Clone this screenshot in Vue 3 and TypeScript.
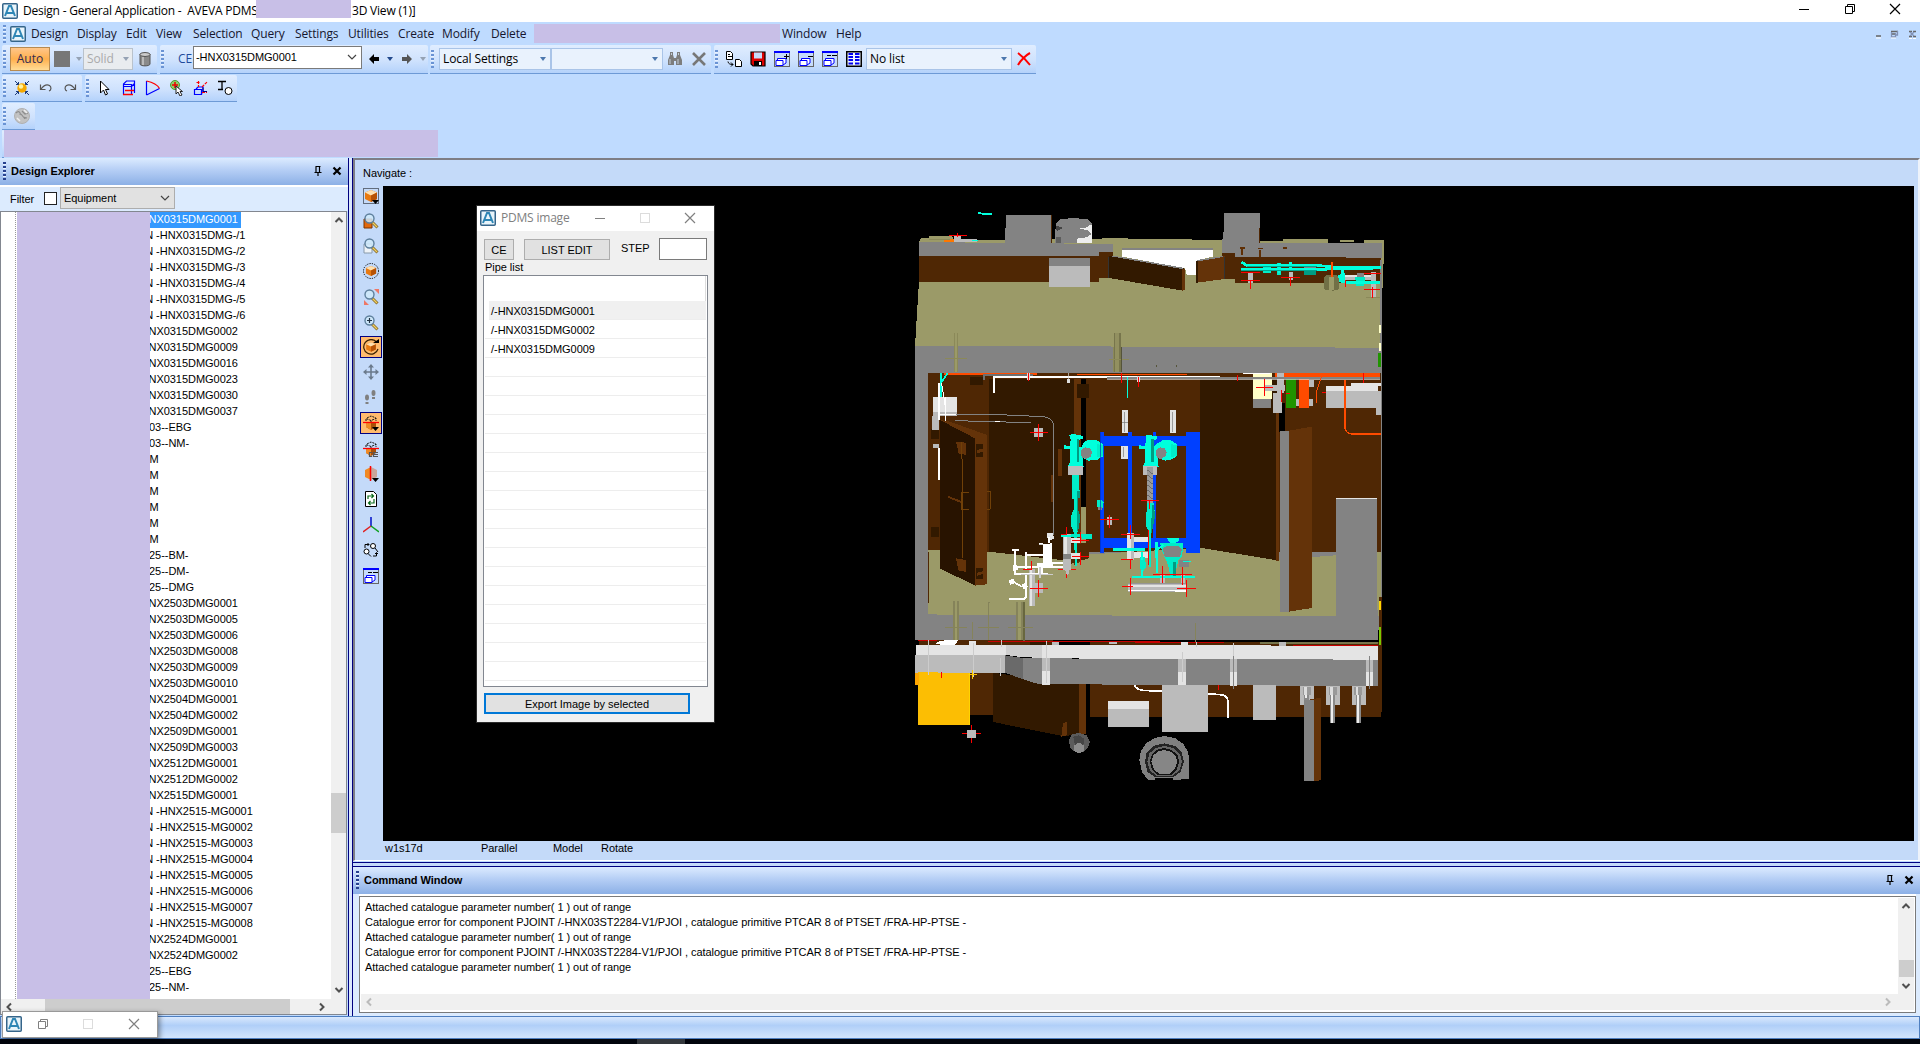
<script setup lang="ts">
type Poly = [fill: string, points: string]
type Line = [color: string, width: number, d: string]
interface Layer { y: number; polys: Poly[]; lines: Line[]; marks: string }

const menus: [string, number][] = [
  ['Design', 46], ['Display', 49], ['Edit', 30], ['View', 37], ['Selection', 58], ['Query', 44],
  ['Settings', 53], ['Utilities', 50], ['Create', 44], ['Modify', 49], ['Delete', 42],
]

const seq = (pre: string, ids: string[]) => ids.map((i) => pre + i)
const tree: string[] = [
  'NX0315DMG0001',
  ...seq('N -HNX0315DMG-/', ['1', '2', '3', '4', '5', '6']),
  ...seq('NX0315DMG00', ['02', '09', '16', '23', '30', '37']),
  '03--EBG', '03--NM-', 'M', 'M', 'M', 'M', 'M', 'M',
  '25--BM-', '25--DM-', '25--DMG',
  ...seq('NX2503DMG00', ['01', '05', '06', '08', '09', '10']),
  ...seq('NX2504DMG00', ['01', '02']),
  ...seq('NX2509DMG00', ['01', '03']),
  ...seq('NX2512DMG00', ['01', '02']),
  'NX2515DMG0001',
  ...seq('N -HNX2515-MG000', ['1', '2', '3', '4', '5', '6', '7', '8']),
  ...seq('NX2524DMG00', ['01', '02']),
  '25--EBG', '25--NM-',
]
const shift = (t: string) => (t.startsWith('N -') ? 'far' : t === 'M' ? 'em' : t.startsWith('N') ? 'en' : '')

const pipes = ['/-HNX0315DMG0001', '/-HNX0315DMG0002', '/-HNX0315DMG0009', ...Array(17).fill('')]

const rangeMsg = 'Attached catalogue parameter number( 1 ) out of range'
const catMsg = 'Catalogue error for component PJOINT /-HNX03ST2284-V1/PJOI , catalogue primitive PTCAR 8 of PTSET /FRA-HP-PTSE -'
const log = [rangeMsg, catMsg, rangeMsg, catMsg, rangeMsg]

const box = '<path d="M8 2l6 2.5v6.500L8 14l-6-3V4.500z" fill="#e87a12"/><path d="M8 2l6 2.500L8 7.500 2 4.500z" fill="#fde0b0"/><path d="M8 7.500v6.500l6-3V4.500z" fill="#b75205"/>'
const lens = '<path d="M9 9l5.500 5.500" stroke="#8a6d2c" stroke-width="3"/><path d="M9.500 9.500l4.500 4.500" stroke="#f0d060" stroke-width="1.300"/><circle cx="6.500" cy="5.500" r="4.500" fill="#cfe9fa" fill-opacity=".85" stroke="#5d7f9c" stroke-width="1.400"/>'
const halfbox = '<path d="M3 7h10v5l-5 3-5-3z" fill="#a85008"/><path d="M3 7h5v8l-5-3z" fill="#f08a25"/><path d="M4 3l4-2 5 2v3M3 6V3.500l5 2 5-2M8 5.500V7" stroke="#111" fill="none" stroke-dasharray="2 1"/><path d="M0 7.500h16" stroke="#f00" stroke-width="1.300"/>'
const drop = '<path d="M9 12h7l-3.500 4z" fill="#000"/>'
const win = '<rect x=".5" y=".5" width="15" height="15" fill="#c7dcfb" stroke="#666"/><path d="M0 1h16" stroke="#00f" stroke-width="2"/><path d="M2 9.500h7v5H2zM3.500 9V7.500H12v4.500l-3 2" fill="#fff" stroke="#00f"/>'
const icons: Record<string, string> = {
  logo: '<rect x=".75" y=".75" width="14.500" height="14.500" rx="1" fill="#e9f5fb" stroke="#35658a" stroke-width="1.500"/><path d="M3 13L7 3h2l4 10M4 10h8" fill="none" stroke="#2e86b5" stroke-width="2"/>',
  cyl: '<path d="M3 3v10c0 2.500 10 2.500 10 0V3z" fill="#8a8a8a" stroke="#555"/><ellipse cx="8" cy="3.500" rx="5" ry="2" fill="#ccc" stroke="#555"/><path d="M6 6v8" stroke="#bbb" stroke-width="2"/>',
  back: '<path d="M8 3L3 8l5 5v-3h5V6H8z" fill="#000"/>',
  fwd: '<path d="M8 3l5 5-5 5v-3H3V6h5z" fill="#555"/>',
  bino: '<path d="M1 14V9l2-5h3l1 3h2l1-3h3l2 5v5H9v-4H7v4zM3 1h3v3H3zM10 1h3v3h-3z" fill="#7d7d7d"/><path d="M3 8v5M11 8v5M4.500 2v2M11.500 2v2" stroke="#c4cfdc"/>',
  gx: '<path d="M2 2l12 12M14 2L2 14" stroke="#777" stroke-width="2.600"/>',
  copy: '<path d="M.5.500h4l2 2v6h-6zM9.500 8.500h4l2 2v5h-6z" fill="#fff" stroke="#000"/><path d="M2 3.500h2M2 5.500h4M2 10.500c0 2 2 3 5 3M5 11.500l2 2-2 2" fill="none" stroke="#000"/>',
  save: '<path d="M1 1h14v14H3l-2-2z" fill="#d00" stroke="#000" stroke-width="1.200"/><path d="M4 1.500h8v6H4z" fill="#c7dcfb" /><path d="M4 10h8v5H4z" fill="#000"/><path d="M9 11h2v3H9z" fill="#fff"/>',
  winp: win + '<path d="M10 5.500h5M12.500 3v5" stroke="#000"/>',
  winm: win + '<path d="M10 5.500h5" stroke="#000"/>',
  winmm: win + '<path d="M5 4.500h4M10 4.500h5" stroke="#000"/>',
  list: '<rect x=".75" y=".75" width="14.500" height="14.500" fill="#eef4ff" stroke="#000" stroke-width="1.500"/><path d="M2.500 3h4.500M2.500 6h4.500M2.500 9h4.500M2.500 12.500h4.500M9 3h4.500M9 6h4.500M9 9h4.500M9 12.500h4.500" stroke="#0000f0" stroke-width="2"/>',
  redx: '<path d="M2 2c4 3 8 7 12 12M14 2C10 4 4 10 2 14" fill="none" stroke="#f00" stroke-width="2"/>',
  sun: '<path d="M1 1l4 4M15 1l-4 4M1 15l4-4M15 15l-4-4" stroke="#1b3a7a" stroke-width="1"/><path d="M4.500 2v2.500H2M11.500 2v2.500H14M4.500 14v-2.500H2M11.500 14v-2.500H14" fill="none" stroke="#1b3a7a"/><circle cx="8" cy="8" r="4.700" fill="#f5a800"/><circle cx="7" cy="6.500" r="2.200" fill="#fff3a0"/>',
  undo: '<path d="M2.500 4.500v5h5M3 9C6 5 9 4 11.500 5.500c2 1.500 2 4.500-.5 5.500" fill="none" stroke="#555" stroke-width="1.200"/>',
  redo: '<path d="M13.500 4.500v5h-5M13 9C10 5 7 4 4.500 5.500c-2 1.500-2 4.500.5 5.500" fill="none" stroke="#555" stroke-width="1.200"/>',
  cursor: '<path d="M3.500 1v12l3-3 2 5 2-1-2-4.500H12z" fill="#fff" stroke="#000"/>',
  cube: '<path d="M2.500 6.500V4l3-3h8v2.500l-3 3zM2.500 6.500v8M13.500 4v9M10.500 6.500v8M10.500 6.500l3-3M2.500 4.500h8v2" fill="none" stroke="#00f" stroke-width="1.200"/><path d="M2 14.500h10M4 10.500h9" stroke="#f00" stroke-width="1.300"/>',
  tri: '<path d="M1.500 15V1M1.500 15L14.500 8.500" fill="none" stroke="#00f" stroke-width="1.200"/><path d="M1.500 1C6 2 12 4 14.500 8.500" fill="none" stroke="#f00" stroke-width="1.200"/>',
  pick: '<circle cx="6" cy="5" r="4.500" fill="#8fd068" stroke="#4a9a30"/><path d="M6 2v6M3 5h6" stroke="#e00" stroke-width="1.500"/><path d="M7 6v8l2-2 2 4 2-1-2-3.500h2.500z" fill="#fff" stroke="#222"/>',
  axes: '<path d="M1.500 9.500h7v5h-7zM3 9l2-2h5v5l-2 2" fill="none" stroke="#00f" stroke-width="1.200"/><path d="M5.500 1v6M3.500 2.500h4M9 7l5-5M9 12.500h5" stroke="#f00" stroke-width="1.200" stroke-dasharray="3 1"/><path d="M10 7.500v4h4" fill="none" stroke="#000080"/>',
  ibeam: '<path d="M1 1.500h8M5 1.500v8M1 9.500h5" stroke="#000" stroke-width="1.300"/><circle cx="11.500" cy="11" r="3.500" fill="#fff" stroke="#000"/>',
  globe: '<circle cx="8" cy="8" r="7.500" fill="#c2c2c2" stroke="#b0b0b0"/><path d="M2 5c3-3 5 0 4 2M8 3l3 3 3-1M9 9l4 1M7 6l4 5" fill="none" stroke="#8c8c8c" stroke-width="1.200"/><path d="M3 10l3 3M10 2l3 3" stroke="#eee" stroke-width="1.500"/>',
  n0: '<rect x=".5" y=".5" width="15" height="15" fill="none" stroke="#000" stroke-dasharray="1 1"/>' + box + drop,
  n1: '<path d="M1 6h8v9H1z" fill="#e2680c" stroke="#7a3500"/>' + lens,
  n2: '<path d="M1 6h8v9H1z" fill="#eef3f8" stroke="#8899aa"/>' + lens,
  n3: '<circle cx="8" cy="8" r="7.500" fill="none" stroke="#000" stroke-dasharray="1.200 1.200"/><g transform="translate(1.200 1.200) scale(.85)">' + box + '</g>',
  n4: '<path d="M11 0h5v5zM1 11v5h5z" fill="#ee7766"/>' + lens,
  n5: lens + '<path d="M4 5.500h5M6.500 3v5" stroke="#234" stroke-width="1.200"/>',
  n6: '<g transform="translate(1.600 1.600) scale(.8)">' + box + '</g><path d="M13.500 3A7.300 7.300 0 1 0 15 10" fill="none" stroke="#3a2000" stroke-width="1.200"/><path d="M10 4h6V0z" fill="#000"/>',
  n7: '<path d="M8 1v14M1 8h14" stroke="#6b7a8c" stroke-width="1.600"/><path d="M8 0l3 3.500H5zM8 16l3-3.500H5zM0 8l3.500-3v6zM16 8l-3.500-3v6z" fill="#6b7a8c"/>',
  n8: '<ellipse cx="4" cy="8.500" rx="2" ry="3" fill="#808080"/><path d="M2.500 13h3v2h-3zM9 8h3v2H9z" fill="#808080"/><ellipse cx="10.500" cy="4" rx="2" ry="3" fill="#808080"/>',
  n9: halfbox + drop,
  n10: halfbox + '<path d="M9 11.500H6.500V15.500H9M15 11.500h-4.500v4H15M10.500 13.500H15" fill="none" stroke="#555" stroke-width="1.200"/>',
  n11: '<path d="M2 4l6-3v13l-6-3z" fill="#f08a25"/><path d="M8 1l6 3v7l-6 3z" fill="#caa59a"/><path d="M7.500 0v15" stroke="#f00" stroke-width="1.500"/>' + drop,
  n12: '<path d="M2.500.500h8l3 3v12h-11z" fill="#fff" stroke="#000"/><path d="M5 8V5h5M8.500 3L10.500 5l-2 2M11 8v4H6M7.500 10l-2 2 2 2" fill="none" stroke="#0a6a1a" stroke-width="1.200"/>',
  n13: '<path d="M8 0v9" stroke="#2030d0" stroke-width="1.800"/><path d="M8 9l-8 6" stroke="#e02020" stroke-width="1.500"/><path d="M8 9l8 6" stroke="#10a020" stroke-width="1.500"/>',
  n14: '<circle cx="10" cy="4" r="2.500" fill="#fff" stroke="#000"/><circle cx="3.500" cy="9.500" r="2.500" fill="#fff" stroke="#000"/><path d="M12 6l3 4M5 11.500l3 3M2 6V2.500h4M4.500 1L6 2.500 4.500 4M10 14h3.500V11M12 12l1.500-1.500L15 12" fill="none" stroke="#000"/>',
  n15: win + '<path d="M5 4.500h4M10 4.500h5" stroke="#000"/>',
  pin: '<path d="M5.500 3.500h5M6 3.500V9M9.500 3.500V9M4.500 9.500h7M8 10v3" fill="none" stroke="#000" stroke-width="1.200"/>',
  bx: '<path d="M4.500 4.500l7 7M11.500 4.500l-7 7" stroke="#000" stroke-width="2.200"/>',
  min: '<path d="M3 8.500h10" stroke="currentColor"/>',
  max: '<rect x="3.500" y="3.500" width="9" height="9" fill="none" stroke="currentColor"/>',
  rest: '<path d="M3.500 5.500h7v7h-7zM5.500 5.500v-2h7v7h-2" fill="none" stroke="currentColor"/>',
  close: '<path d="M3 3l10 10M13 3L3 13" stroke="currentColor" stroke-width="1.200"/>',
  up: '<path d="M4.500 10l3.500-3.500 3.500 3.500" fill="none" stroke="currentColor" stroke-width="2"/>',
  down: '<path d="M4.500 6l3.500 3.500L11.500 6" fill="none" stroke="currentColor" stroke-width="2"/>',
  left: '<path d="M10 4.500L6.500 8l3.500 3.500" fill="none" stroke="currentColor" stroke-width="2"/>',
  right: '<path d="M6 4.500L9.500 8 6 11.500" fill="none" stroke="currentColor" stroke-width="2"/>',
  chev: '<path d="M4 6l4 4 4-4" fill="none" stroke="#444" stroke-width="1.200"/>',
}
const nav: [string, number, boolean][] = [
  ['n0', 25, false], ['n1', 25, false], ['n2', 25, false], ['n3', 26, false], ['n4', 26, false], ['n5', 25, false],
  ['n6', 24, true], ['n7', 25, false], ['n8', 26, false], ['n9', 26, true], ['n10', 25, false], ['n11', 25, false],
  ['n12', 26, false], ['n13', 26, false], ['n14', 23, false], ['n15', 30, false],
]
const rowTools = ['copy', 'save', 'winp', 'winm', 'winmm', 'list']
const pickTools = ['cursor', 'cube', 'tri', 'pick', 'axes', 'ibeam']

const r = (x: number, y: number, x2: number, y2: number) => `${x},${y} ${x2},${y} ${x2},${y2} ${x},${y2}`
const G = '#838383', O = '#9b9a68', B = '#4f2704', D = '#321900', M = '#643309', L = '#bbbbbb', W = '#e4e4e4'
const C = '#00ffdc', T = '#00ecc8', S = '#009c82', K = '#0040ff', R = '#ff4b00'

/* The model, from the roof down; one unit is a third of a pixel. */
const layers: Layer[] = [
  {
    y: 370,
    polys: [
      [G, r(45, -10, 1446, 780)], [B, r(84, 5, 1443, 545)], [O, '84,540 267,545 460,560 900,533 1130,570 1443,545 1443,738 786,738 138,734 84,731'],
      [D, '267,28 524,28 524,560 500,572 267,545'], [M, '522,28 543,28 543,575 522,585'], ['#000', r(543, 28, 558, 410)], [O, r(543, 410, 558, 520)],
      [D, '530,43 566,43 566,83 530,83'], [D, '900,28 1137,28 1137,572 900,533'], [M, r(1128, 130, 1137, 572)], ['#000', r(1137, 100, 1155, 185)],
      [M, r(474, 238, 485, 318)], [M, r(453, 315, 461, 395)], [B, '500,520 566,525 566,565 500,585'],
      ['#281300', '120,150 225,205 225,647 120,595'], [M, '120,150 150,155 261,195 261,643 225,647 225,205'],
      [M, '168,215 197,218 197,255 176,250'], [M, '168,565 197,570 197,605 176,603'], [D, r(228, 222, 248, 260)], [D, r(228, 594, 248, 626)],
      [M, '231,240 248,236 248,245 231,250'], [M, '231,608 248,604 248,612 231,618'], [M, '145,378 190,395 190,402 145,384'],
      [D, r(92, 178, 118, 208)], [D, r(92, 472, 118, 502)],
      [W, r(99, 81, 171, 125)], [L, r(99, 125, 171, 138)], [L, r(95, 138, 116, 180)], [L, r(98, 222, 116, 234)],
      [K, r(600, 185, 611, 548)], [K, r(684, 186, 696, 505)], [K, r(759, 186, 768, 505)], [K, r(858, 186, 900, 548)],
      [K, r(611, 198, 858, 228)], [K, r(611, 505, 858, 535)],
      [W, r(666, 120, 684, 188)], [W, r(810, 120, 827, 188)], [W, r(664, 228, 684, 266)],
      [G, r(1140, 182, 1167, 726)], [M, '1167,182 1236,170 1236,713 1167,725'], [G, r(1308, 384, 1431, 745)], [W, r(1308, 384, 1431, 387)],
      [R, r(132, 6, 410, 14)], [R, r(1125, 9, 1440, 24)], ['#ffffc8', r(1059, 9, 1116, 87)], [G, r(1059, 87, 1113, 114)],
      ['#209400', r(1158, 22, 1188, 114)], [R, r(1197, 22, 1227, 114)], [L, r(1132, 9, 1153, 70)], [L, r(1119, 70, 1145, 129)],
      [L, r(1092, 45, 1155, 62)], [L, r(1188, 88, 1197, 108)], [L, r(1227, 88, 1239, 108)], [L, r(1227, 30, 1242, 50)],
      [W, r(1278, 48, 1434, 62)], [L, r(1278, 62, 1443, 114)], [W, r(1353, 38, 1443, 48)], [L, r(1428, 114, 1443, 134)],
      [C, '508,195 520,192 535,195 550,198 548,206 538,209 538,232 545,232 552,222 548,285 552,290 503,290 510,275 510,238 493,238 493,226 510,228 512,209'],
      [C, '548,220 565,209 590,210 608,222 609,260 590,270 565,272 545,262'], [T, '590,222 608,226 608,258 590,262'], [S, r(530, 206, 538, 275)], [G, '543,240 556,232 570,235 577,247 572,260 558,267 545,262'],
      [L, r(503, 288, 549, 314)], [T, '515,314 537,314 537,358 541,362 541,382 534,386 534,420 541,440 536,476 532,488 532,590 525,588 522,488 514,470 514,436 522,415 522,388 515,385 515,358'],
      [S, '531,362 541,362 541,382 534,386 534,420 541,440 536,476 530,488'],
      [C, '738,195 772,198 770,208 762,210 762,228 772,222 773,280 776,290 728,290 736,275 736,238 718,238 718,226 736,228'],
      [C, '772,220 790,210 812,210 830,222 831,258 815,268 795,272 770,262'], [T, '812,222 830,226 830,258 812,262'], [S, r(754, 206, 762, 275)], [G, '768,240 780,232 794,235 801,247 795,260 782,267 770,262'],
      [L, r(729, 288, 771, 314)], ['#9a9a9a', r(741, 290, 760, 400)], [T, '741,400 762,400 765,440 758,476 754,490 754,590 748,590 748,488 739,470 739,436'], [S, '755,405 762,405 765,440 758,476 754,490'],
      [T, '591,392 600,388 611,395 609,412 600,420 592,412'], [G, r(594, 412, 607, 421)],
      [L, r(489, 492, 512, 600)], [W, r(493, 494, 500, 552)], [G, r(489, 552, 512, 566)], [W, r(512, 504, 542, 518)], [W, r(512, 550, 542, 566)], [T, '512,492 575,492 575,506 545,506 545,500 512,500'],
      [L, '496,600 508,600 505,615 498,615'], [W, r(681, 490, 702, 570)], [L, r(692, 490, 702, 570)], [W, r(702, 502, 746, 516)], [W, r(702, 546, 746, 564)],
      [C, '640,534 735,534 735,542 640,542'], [T, '780,520 850,520 850,530 845,560 835,570 828,600 826,625 810,625 808,600 800,575 785,540'], [C, '800,505 835,503 838,512 826,518 810,518'],
      [G, '788,535 800,528 835,528 846,538 840,562 795,562'], [G, r(838, 570, 867, 590)], [T, '720,560 735,560 738,590 730,605 720,595'], [C, '765,515 775,515 773,610 768,610'],
      [S, r(820, 575, 828, 622)],
      [L, r(684, 640, 858, 664)], [W, r(684, 644, 858, 652)], [L, r(780, 612, 795, 640)], [L, r(843, 612, 855, 640)], ['#fff', r(684, 660, 860, 665)],
      ['#fff', '428,522 456,520 458,592 430,590'], [W, '440,488 458,490 463,505 448,512 440,500'], [L, r(388, 597, 406, 708)], [W, r(391, 597, 397, 708)], [L, r(402, 640, 430, 670)], [L, r(402, 174, 428, 200)],
      ['#fff', '338,585 350,585 356,600 340,602'], ['#fff', '326,630 340,627 345,640 330,645'], ['#fff', '364,645 376,638 384,650 372,658'], ['#fff', '412,580 428,578 430,608 414,608'], [L, r(620, 440, 636, 465)],
      ['#85835a', r(162, 694, 176, 780)], [O, r(166, 694, 172, 780)], ['#85835a', r(347, 696, 375, 780)], [O, r(352, 696, 365, 780)],
    ],
    lines: [
      ['#fff', 6, 'M283 70V22H960M1030 10H1110'], ['#6f6f6f', 6, 'M252 70V15H400'], [R, 4, 'M530 14H860'], [G, 4, 'M620 24H1440'], ['#ddd', 2, 'M620 28H1440M505 8V36'],
      ['#ddd', 8, 'M385 8V30M505 26V38M715 18V36'],
      [R, 4, 'M1335 30V175Q1340 192 1355 192H1443'], [R, 3, 'M1251 98V60L1265 18'], [C, 5, 'M124 5V80M144 8L122 40M683 20V84'], ['#fff', 5, 'M117 40V150M117 235V330'], ['#fff', 3, 'M125 40L136 110V150M138 152V82'],
      [G, 3, 'M120 134H300L430 140Q460 145 460 165V495M165 152L392 158'], ['#fff', 3, 'M120 134H168M285 155H300'],
      ['#704008', 3, 'M184 215V245L188 290V565M206 368H184V418H206M262 364H271V418H262'],
      ['#0030c0', 2, 'M603 186V546'], ['#6b6b6b', 3, 'M742 300L758 312M742 315L758 327M742 330L758 342M742 345L758 357M742 360L758 372M742 375L758 387'],
      ['#777', 2, 'M675 125V185M818 125V185M672 232V262M665 157H684'],
      ['#fff', 5, 'M345 540V612H445M335 540H356M378 545V600M378 556H450M345 592H490M448 500V520M418 523H430M458 580H490'], ['#fff', 5, 'M378 612V680Q376 688 365 688H327M340 635L365 650'],
      ['#ccc', 4, 'M420 590V625M362 614H460M416 523H430'], [C, 6, 'M484 498H512M697 622H885M727 600V622M727 545V570M770 540L790 525'], [C, 4, 'M825 508V520M850 575H872'],
      [G, 2, 'M684 642H858M684 664H825'], ['#85835a', 3, 'M268 696V780M217 755V780M886 757V780M135 772H200M234 772H298M324 772H396M378 712H416'],
      [B, 3, 'M86 545V704'], ['#f9b800', 3, 'M1440 692V720M1438 740V770'],
    ],
    marks: 'M385 8V34M415 162V214M390 187H444M360 8H410M715 20V50M665 10V38M1093 28V78M1068 52H1118M1012 15V32M1390 10V38M1145 60V96M1158 70H1170M1266 68H1278M499 470V496M483 495H500M541 485V518M515 511H568M515 559H568M541 545V585M750 390V418M723 391H777M628 435V475M600 448H657M691 466V506M664 493H720M691 568V596M664 568H700M745 480V585M787 588V640M760 613H876M847 590V645M691 625V675M666 649H700M859 630V680M832 655H888M415 630V680M390 655H444M395 574V600M368 598H395M499 612V625M475 598H490M512 598H528',
  },
  {
    y: 190,
    polys: [
      [O, '63,144 87,144 87,138 155,138 160,146 235,150 650,145 968,150 1080,153 1149,153 1149,147 1284,147 1284,162 1392,162 1392,150 1451,150 1451,210 1440,475 45,468 57,275 57,156'],
      [G, '57,156 235,158 640,162 640,198 57,198'], [B, '57,198 597,198 597,186 640,186 640,200 625,264 597,264 597,276 57,276'],
      [G, '315,158 318,75 455,75 455,158'], [B, r(452, 75, 456, 158)],
      [G, '468,100 480,88 520,84 562,88 576,100 576,158 465,158 465,135'], ['#eee', '540,115 576,104 576,158 530,158'], ['#5d5d5d', r(468, 140, 484, 158)], ['#444', '468,106 490,114 470,124'],
      [G, '468,100 480,88 520,84 562,88 576,100 562,112 520,116 480,112'], [G, '465,130 480,118 520,114 562,120 574,132 560,142 520,146 480,142'],
      [G, r(447, 204, 570, 228)], [L, r(447, 228, 570, 291)],
      ['#fff', '666,178 939,178 939,200 888,212 888,254 860,254 855,235 700,206 666,200'], [G, r(666, 174, 939, 179)],
      [D, '628,198 855,236 848,302 628,264'], [G, '628,198 660,200 855,234 845,237'], [M, '846,236 855,236 855,300 846,302'],
      [G, '972,69 1080,69 1080,162 1446,162 1446,203 965,190 965,150 970,146'], [G, r(1004, 160, 1446, 203)], [B, '966,189 1004,189 1004,201 1443,203 1443,279 1004,279 1004,267 975,267'],
      [M, '890,212 975,198 975,267 890,278'], [G, '890,210 970,198 970,201 895,214'], ['#321900', r(888, 212, 893, 278)],
      [B, r(1076, 113, 1080, 160)],
      [G, '45,468 630,468 635,472 1278,472 1440,475 1440,548 45,548'], [G, r(1440, 210, 1446, 548)], [O, r(1320, 150, 1362, 155)],
      ['#8b8959', r(162, 430, 174, 546)], ['#9b9a68', r(166, 430, 171, 546)], ['#77754c', r(642, 430, 663, 546)], ['#929060', r(646, 430, 656, 546)],
      ['#717046', '1272,262 1280,254 1308,254 1316,262 1316,298 1300,302 1272,298'], [O, r(1288, 262, 1302, 300)],
      [L, r(1326, 256, 1425, 270)], [W, r(1326, 256, 1425, 262)], [L, r(1044, 245, 1059, 278)], [L, r(1166, 245, 1179, 270)], [L, r(1413, 245, 1428, 320)],
      [T, r(1130, 220, 1144, 255)], [T, r(1088, 230, 1114, 248)], [S, r(1212, 228, 1248, 254)], [C, '1314,255 1335,250 1335,278 1318,275'], [T, '1366,262 1395,262 1392,288 1368,288'],
      [G, r(1212, 228, 1248, 236)], [G, r(1372, 250, 1392, 262)],
      [L, r(162, 138, 183, 156)], [L, r(183, 147, 230, 156)], ['#ff7700', r(132, 148, 162, 155)], [B, r(245, 570, 265, 616)], ['#321900', r(209, 562, 248, 586)],
      ['#209400', r(1435, 490, 1443, 530)], ['#ffffc8', r(1438, 405, 1443, 430)], ['#ffffc8', r(1438, 458, 1443, 482)],
    ],
    lines: [
      [C, 5, 'M235 68L250 72H275M215 152H234'], [C, 8, 'M1024 216L1040 226H1250L1300 231H1443M1024 238H1260L1443 234M1328 240V275L1345 278H1440M1137 220V250M1172 215V240'],
      ['#00a890', 3, 'M1040 230H1250M1024 242H1250'],
      ['#5f2f05', 5, 'M1020 175H1034M1026 178V196M1074 176H1088M1080 180V200M1149 175H1160'], [R, 6, 'M1295 216V262'], ['#333', 3, 'M625 200V264M973 200V267'],
      ['#8b8959', 3, 'M135 505H200M628 508H686M640 470V545M87 148H150M1398 324H1440'], ['#55543a', 3, 'M664 470V545M770 525V530M829 525V530'],
    ],
    marks: 'M172 128V142M147 136H200M1051 272V297M1024 247H1080M1024 271H1080M1172 265V288M1143 262H1200M1336 270V290M1418 290V324M1392 250H1443M1392 298H1440',
  },
  {
    y: 590,
    polys: [
      ['#000', r(45, 150, 1450, 165)], [G, r(45, 60, 1434, 150)], [O, '84,40 1308,40 1308,78 786,77 138,75 84,72'], [G, r(1140, 20, 1167, 66)], [M, '1167,20 1236,20 1236,54 1167,65'], [G, r(1308, 20, 1431, 150)],
      ['#85835a', r(347, 36, 375, 152)], [O, r(353, 36, 363, 152)], [L, r(388, 0, 406, 48)], [W, r(391, 0, 397, 48)],
      ['#4f2704', r(57, 150, 460, 168)], [B, r(570, 156, 1443, 380)], ['#321900', r(390, 156, 440, 166)], ['#77764c', r(1080, 157, 1434, 163)], [B, r(210, 248, 279, 375)],
      [D, '279,248 430,270 557,280 537,300 537,434 488,438 279,396'], [M, '537,280 557,282 557,432 537,434'], [M, '489,400 500,396 500,436 484,440'],
      ['#c80000', '700,154 980,156 960,160 710,160'], ['#fff', '120,152 175,150 165,165 105,163'], [W, r(207, 152, 228, 166)], [L, r(456, 152, 477, 166)], [L, r(627, 152, 651, 163)], [W, r(843, 155, 864, 166)], [L, r(1136, 155, 1158, 168)],
      [W, '48,166 440,165 780,165 1434,168 1434,209 560,206 370,202 318,194 48,196'], [L, '45,196 318,194 318,248 45,248'],
      ['#6a6a6a', '315,196 369,204 369,268 315,248'], [G, '369,204 560,206 1434,209 1434,288 786,285 415,282 369,268'],
      ['#cfcfcf', '318,166 425,166 425,203 370,202 318,195'], [W, r(426, 165, 450, 284)], [L, r(427, 203, 449, 243)], [W, r(834, 165, 858, 285)], [L, r(835, 207, 857, 246)], [W, r(990, 170, 1011, 287)], [L, r(991, 208, 1010, 246)], [W, r(1398, 170, 1419, 288)], [L, r(1399, 209, 1418, 246)],
      ['#fcbe03', '54,246 210,250 210,405 54,405'], ['#ffa600', r(46, 250, 56, 284)],
      [W, r(624, 333, 747, 357)], [L, r(624, 357, 747, 411)], [L, r(786, 285, 924, 426)], [L, r(1059, 285, 1128, 391)],
      [L, r(1200, 288, 1242, 345)], [L, r(1278, 288, 1320, 345)], [L, r(1356, 288, 1398, 345)],
      [G, r(1212, 330, 1242, 573)], [M, '1224,328 1263,324 1263,571 1242,573 1242,330'], [L, r(201, 420, 228, 444)],
      ['#5b5b5b', '507,450 515,434 537,428 560,436 570,455 564,474 550,486 526,486 510,474'], ['#454545', '520,440 537,436 552,446 550,470 526,470'], ['#8d8d8d', '522,466 537,458 552,466 552,482 537,491 523,484'],
      ['#808080', '718,510 722,485 738,460 765,444 793,438 825,444 850,462 864,485 868,512 866,566 850,566 840,570 744,570 726,546'],
      ['#222', '735,515 740,488 760,468 793,460 825,468 845,488 852,515 842,545 820,562 765,562 742,545'],
      ['#666', '742,515 748,490 768,474 793,468 820,474 840,492 846,515 838,542 816,558 770,558 750,542'],
      ['#111', '750,514 756,492 774,478 793,474 815,480 832,494 838,514 830,540 812,556 774,556 756,540'],
      ['#868686', '754,514 760,496 776,484 793,480 812,485 826,496 832,514 824,538 808,552 778,552 762,538'],
      ['#000', r(765, 563, 820, 572)],
      [B, r(1436, 20, 1446, 365)], ['#7ac800', r(1438, 110, 1444, 165)], ['#ffd500', r(1438, 32, 1444, 60)],
      ['#85835a', r(160, 34, 176, 150)], [O, r(166, 34, 172, 150)], ['#68673f', r(370, 36, 376, 152)],
    ],
    lines: [
      ['#c80000', 3, 'M55 152H112M265 154H780M1180 167H1434'],
      ['#85835a', 3, 'M267 36V150M217 96V146M887 98V156M135 112H200M234 112H298M324 112H398'],
      ['#ccc', 3, 'M85 150V255M220 160V260M304 150V170M301 205V258M439 152V280M847 185V275M889 155V172M1000 158V200'], [G, 3, 'M1000 198V296M1408 198V296'],
      ['#fff', 5, 'M703 285Q712 300 728 301L786 304M924 311L970 315Q984 320 985 340V384'], ['#ffc800', 4, 'M217 240V266M204 253H231'], ['#ffe000', 2, 'M209 250V405'],
      ['#8a8a8a', 14, 'M1298 290V400M1375 290V400M1220 290V330'], ['#eee', 5, 'M1297 300V400M1374 300V400M1218 290V325'], ['#999', 24, 'M1298 292V315M1375 292V315M1220 292V315'], ['#ddd', 7, 'M1295 292V315M1372 292V315M1217 292V315'],
    ],
    marks: 'M124 246V264M214 405V420M214 444V459M186 430H201M228 430H243M955 285V300',
  },
]
</script>

<template>
  <div class="app">
    <header class="title">
      <svg class="ic" viewBox="0 0 16 16" v-html="icons.logo" />
      <span class="caption">Design - General Application - &nbsp;AVEVA PDMS</span>
      <i class="mask" />
      <span class="caption tail">3D View (1)]</span>
      <div class="winbtns">
        <svg class="ic" viewBox="0 0 16 16" v-html="icons.min" />
        <svg class="ic" viewBox="0 0 16 16" v-html="icons.rest" />
        <svg class="ic" viewBox="0 0 16 16" v-html="icons.close" />
      </div>
    </header>

    <nav class="menu">
      <i class="grip" />
      <svg class="ic" viewBox="0 0 16 16" v-html="icons.logo" />
      <div class="items">
        <span v-for="m in menus" :key="m[0]" :style="{ width: m[1] + 'px' }">{{ m[0] }}</span>
      </div>
      <i class="mask" />
      <span class="win">Window</span><span>Help</span>
      <svg class="mdi" viewBox="0 0 42 10">
        <path d="M0 6h5M15 1.500h7M15 4h5M33 1.500h3M37 1.500h3M33 6.500h3M37 6.500h3" stroke="#666" stroke-width="1.500" />
        <path d="M15.500 2v5h4V3M21.500 1v4h-2M34 2l4 4M38 2l-4 4" fill="none" stroke="#8090b4" stroke-width="1.300" />
        <path d="M0 8h5M15 8h5M33 8.500h3M37 8.500h3" stroke="#fff" />
      </svg>
    </nav>

    <div class="bar b1">
      <div class="seg sa">
        <i class="grip" /><button class="auto">Auto</button><i class="swatch" /><i class="tri off" />
        <div class="cmb solid">Solid<i class="tri off" /></div>
        <svg class="ic" viewBox="0 0 16 16" v-html="icons.cyl" />
      </div>
      <div class="seg sb">
        <i class="grip" /><span class="ce">CE</span>
        <div class="edit">-HNX0315DMG0001<svg class="ic" viewBox="0 0 16 16" v-html="icons.chev" /></div>
        <svg class="ic" viewBox="0 0 16 16" v-html="icons.back" /><i class="tri dark" />
        <svg class="ic" viewBox="0 0 16 16" v-html="icons.fwd" /><i class="tri off" />
      </div>
      <div class="seg sc">
        <i class="grip" />
        <div class="cmb">Local Settings<i class="tri" /></div>
        <div class="cmb"><i class="tri" /></div>
        <svg class="ic" viewBox="0 0 16 16" v-html="icons.bino" />
        <svg class="ic" viewBox="0 0 16 16" v-html="icons.gx" />
      </div>
      <div class="seg sd">
        <i class="grip" />
        <svg v-for="t in rowTools" :key="t" class="ic" viewBox="0 0 16 16" v-html="icons[t]" />
        <div class="cmb">No list<i class="tri" /></div>
        <svg class="ic" viewBox="0 0 16 16" v-html="icons.redx" />
      </div>
    </div>
    <div class="bar b2">
      <div class="seg se">
        <i class="grip" />
        <svg v-for="t in ['sun', 'undo', 'redo']" :key="t" class="ic" viewBox="0 0 16 16" v-html="icons[t]" />
      </div>
      <div class="seg sf">
        <i class="grip" />
        <svg v-for="t in pickTools" :key="t" class="ic" viewBox="0 0 16 16" v-html="icons[t]" />
      </div>
    </div>
    <div class="bar b3">
      <div class="seg sg"><i class="grip" /><svg class="ic" viewBox="0 0 16 16" v-html="icons.globe" /></div>
    </div>
    <div class="bar b4"><div class="seg sh" /><i class="mask" /></div>

    <main class="main">
      <section class="explorer">
        <div class="head">
          <i class="grip navy" /><b>Design Explorer</b>
          <svg class="ic" viewBox="0 0 16 16" v-html="icons.pin" />
          <svg class="ic" viewBox="0 0 16 16" v-html="icons.bx" />
        </div>
        <div class="filter">
          <span>Filter</span><i class="check" />
          <div class="drop">Equipment<svg class="ic" viewBox="0 0 16 16" v-html="icons.chev" /></div>
        </div>
        <div class="tree">
          <i class="dots" />
          <i class="mask" />
          <ul>
            <li v-for="(t, i) in tree" :key="i" :class="{ sel: i === 0 }"><span :class="shift(t)">{{ t }}</span></li>
          </ul>
          <div class="vbar">
            <svg class="ic" viewBox="0 0 16 16" v-html="icons.up" />
            <i class="thumb" />
            <svg class="ic" viewBox="0 0 16 16" v-html="icons.down" />
          </div>
          <div class="hbar">
            <svg class="ic" viewBox="0 0 16 16" v-html="icons.left" />
            <i class="thumb" />
            <svg class="ic" viewBox="0 0 16 16" v-html="icons.right" />
          </div>
        </div>
      </section>
      <div class="split" />
      <div class="right">
        <section class="view">
          <div class="navlabel">Navigate :</div>
          <div class="canvasrow">
            <div class="navbar">
              <div v-for="n in nav" :key="n[0]" class="nv" :style="{ height: n[1] + 'px' }">
                <span :class="{ on: n[2] }"><svg class="ic" viewBox="0 0 16 16" v-html="icons[n[0]]" /></span>
              </div>
            </div>
            <svg class="scene" viewBox="383 186 1531 655" shape-rendering="crispEdges">
              <g v-for="(l, i) in layers" :key="i" :transform="`translate(900 ${l.y}) scale(.33333)`">
                <polygon v-for="(p, j) in l.polys" :key="'p' + j" :fill="p[0]" :points="p[1]" />
                <path v-for="(p, j) in l.lines" :key="'l' + j" :stroke="p[0]" :stroke-width="p[1]" :d="p[2]" fill="none" />
                <path :d="l.marks" stroke="#f00" stroke-width="3" />
              </g>
            </svg>
          </div>
          <div class="info"><span>w1s17d</span><span>Parallel</span><span>Model</span><span>Rotate</span></div>
        </section>
        <div class="hsplit" />
        <section class="command">
          <div class="head">
            <i class="grip navy" /><b>Command Window</b>
            <svg class="ic" viewBox="0 0 16 16" v-html="icons.pin" />
            <svg class="ic" viewBox="0 0 16 16" v-html="icons.bx" />
          </div>
          <div class="console">
            <div class="lines"><p v-for="(l, i) in log" :key="i">{{ l }}</p></div>
            <div class="vbar">
              <svg class="ic" viewBox="0 0 16 16" v-html="icons.up" />
              <i class="thumb" />
              <svg class="ic" viewBox="0 0 16 16" v-html="icons.down" />
            </div>
            <div class="hbar">
              <svg class="ic" viewBox="0 0 16 16" v-html="icons.left" />
              <svg class="ic" viewBox="0 0 16 16" v-html="icons.right" />
            </div>
          </div>
        </section>
      </div>
    </main>
    <footer class="status" />
    <div class="taskbar"><i /></div>

    <div class="dialog">
      <div class="dtitle">
        <svg class="ic" viewBox="0 0 16 16" v-html="icons.logo" />
        <span>PDMS image</span>
        <svg class="ic" viewBox="0 0 16 16" v-html="icons.min" />
        <svg class="ic faint" viewBox="0 0 16 16" v-html="icons.max" />
        <svg class="ic" viewBox="0 0 16 16" v-html="icons.close" />
      </div>
      <div class="dtools">
        <button class="btn c">CE</button><button class="btn l">LIST EDIT</button><span>STEP</span><i class="field" />
      </div>
      <div class="dlabel">Pipe list</div>
      <div class="plist">
        <div class="phead" />
        <div v-for="(p, i) in pipes" :key="i" class="prow" :class="{ cur: i === 0 }">{{ p }}</div>
      </div>
      <button class="export">Export Image by selected</button>
    </div>

    <div class="mini">
      <svg class="ic" viewBox="0 0 16 16" v-html="icons.logo" />
      <svg class="ic" viewBox="0 0 16 16" v-html="icons.rest" />
      <svg class="ic faint" viewBox="0 0 16 16" v-html="icons.max" />
      <svg class="ic" viewBox="0 0 16 16" v-html="icons.close" />
    </div>
  </div>
</template>

<style>
html, body { margin: 0; overflow: hidden; }
</style>

<style scoped>
* { box-sizing: border-box; }
.app { position: relative; display: flex; flex-direction: column; width: 1920px; height: 1044px; overflow: hidden; background: #bfdbff; font: 11px/16px "Liberation Sans", Arial, sans-serif; letter-spacing: -.04px; color: #000; }
.ic { width: 16px; height: 16px; flex: none; display: block; }
button { font: inherit; color: inherit; padding: 0; margin: 0; border-radius: 0; }
.mask { display: block; flex: none; background: #c8bfe7; }
.grip { display: block; width: 3px; height: 18px; margin-left: 1px; flex: none; background: repeating-linear-gradient(#6a93d4 0 2px, #e8f2ff 2px 3px, transparent 3px 4px); }
.grip.navy { background: repeating-linear-gradient(#27418f 0 2px, #e8f2ff 2px 3px, transparent 3px 4px); }

.title { display: flex; align-items: center; height: 22px; background: #fff; padding-left: 2px; font: 12px/22px "Open Sans", "Noto Sans", sans-serif; }
.caption { width: 233px; margin-left: 5px; white-space: nowrap; letter-spacing: -.22px; }
.title .mask { width: 95px; height: 18px; align-self: flex-start; }
.caption.tail { margin-left: 1px; width: 80px; letter-spacing: -.2px; }
.winbtns { margin-left: auto; display: flex; gap: 29.500px; padding-right: 17px; margin-top: -4px; }

.menu { display: flex; align-items: center; height: 23px; padding-left: 2px; font: 12px/23px "Open Sans", "Noto Sans", sans-serif; color: #16162e; letter-spacing: -.14px; }
.menu .ic { margin-left: 4px; }
.menu .items { display: flex; width: 503px; margin-left: 5px; flex: none; }
.menu .items span { flex: none; }
.menu .mask { width: 246px; height: 19px; }
.menu .win { width: 54px; margin-left: 2px; }
.mdi { width: 42px; height: 10px; margin-left: auto; margin-right: 2px; margin-top: 2px; }

.bar { display: flex; align-items: flex-start; padding-left: 2px; }
.b1 { height: 30px; font: 12px/20px "Open Sans", "Noto Sans", sans-serif; letter-spacing: -.1px; }
.b2 { height: 28px; gap: 3px; }
.b3 { height: 27px; }
.b4 { height: 28px; }
.seg { display: grid; align-items: center; height: 29px; border-bottom: 1px solid #6d9ad6; border-radius: 2px 2px 0 0; background: linear-gradient(#e0edff, #cfe2fd 55%, #b4d2fb); }
.seg > .ic, .seg > .tri, .swatch { justify-self: center; }
.sa { width: 155px; grid-template-columns: 8px 40px 24px 9px 50px 24px; }
.sb { width: 268px; margin-left: 3px; grid-template-columns: 8px 25px 169px 24px 8px 26px 6px; }
.sc { width: 281px; margin-left: 2px; grid-template-columns: 9px 112px 112px 23px 25px; }
.sd { width: 322px; margin-left: 3px; grid-template-columns: 8px repeat(6, 24px) 146px 24px; }
.se { width: 80px; height: 27px; grid-template-columns: 8px repeat(3, 24px); }
.sf { width: 152px; height: 27px; grid-template-columns: 8px repeat(6, 24px); }
.sg { width: 33px; grid-template-columns: 8px 24px; height: 27px; }
.sh { width: 2px; height: 28px; }
.b4 .mask { width: 434px; height: 27px; }
.auto { height: 24px; border: 1px solid #b78a50; background: linear-gradient(#ffc68a, #ffb04e 50%, #ffdc96); color: #332a50; }
.swatch { width: 16px; height: 16px; background: #777; }
.tri { width: 0; height: 0; border: 3.500px solid transparent; border-top: 4px solid #4d78ae; border-bottom: 0; }
.tri.off { border-top-color: #95a2b4; }
.tri.dark { border-top-color: #234a8c; }
.cmb { display: flex; align-items: center; justify-content: space-between; height: 22px; padding: 0 4px 0 3px; border: 1px solid #a9c4e8; background: #e9f2fd; }
.sc .cmb + .cmb { justify-content: flex-end; }
.cmb.solid { background: #e9ecef; border-color: #b9c2cc; color: #aaa; padding-right: 3px; }
.ce { color: #1f4a9c; padding-left: 10px; }
.edit { display: flex; align-items: center; justify-content: space-between; height: 23px; border: 1px solid #7a7a7a; background: #fff; margin-top: -3px; padding: 0 1px 2px 2px; font: 11px/18px "Liberation Sans", Arial, sans-serif; letter-spacing: -.04px; }

.main { display: flex; height: 858px; }
.explorer { width: 348px; display: flex; flex-direction: column; }
.head { display: flex; align-items: center; height: 27px; background: linear-gradient(#dcebff, #b5cef5 45%, #8cb0e6); font-size: 11px; padding: 0 0 1px 2px; flex: none; }
.head b { margin: 0 auto 0 5px; }
.head .ic { margin-right: 3px; }
.filter { display: flex; height: 26px; border-top: 2px solid #fff; background: #dcebfe; padding-left: 10px; align-items: center; }
.filter span { width: 34px; }
.check { width: 13px; height: 13px; background: #fff; border: 1px solid #222; margin-right: 3px; margin-top: -1px; }
.drop { width: 115px; height: 22px; border: 1px solid #adadad; background: #e1e1e1; display: flex; align-items: center; justify-content: space-between; padding: 0 1px 0 3px; align-self: flex-start; }
.tree { width: 347px; height: 804px; display: grid; grid-template: 787px 15px / 15px 134px 1fr 15px; background: #fff; border: 1px solid #828790; }
.dots { border-right: 1px dotted #999; }
.tree .mask { margin-left: 1px; }
.tree ul { list-style: none; margin: 0; padding: 0; overflow: hidden; }
.tree li { height: 16px; overflow: hidden; white-space: nowrap; font-size: 11px; line-height: 15px; }
.tree li span { display: inline-block; padding-right: 3px; height: 16px; margin-left: -1px; }
.tree li .en { margin-left: -1.500px; }
.tree li .far { margin-left: -4.800px; }
.tree li .em { margin-left: -.5px; }
.tree .sel span { background: #3399ff; color: #fff; }
.vbar { display: flex; flex-direction: column; align-items: center; justify-content: space-between; background: #f0f0f0; color: #505050; }
.thumb { background: #cdcdcd; }
.tree .vbar .thumb { width: 15px; height: 40px; margin-top: 556px; margin-bottom: 141px; }
.tree .vbar .ic:last-child { margin-bottom: 1px; }
.tree .hbar { grid-column: 1 / 5; display: flex; align-items: center; background: #f0f0f0; color: #505050; }
.tree .hbar .thumb { width: 245px; height: 15px; margin: 0 24px 0 28px; }
.split { width: 5px; background: #dbe8fc; border-left: 1px solid #000080; border-right: 1px solid #000080; }

.right { flex: 1; display: flex; flex-direction: column; }
.view { height: 703px; border-top: 2px solid #7e7e86; border-left: 2px solid #7e7e86; border-right: 2px solid #eef3fb; border-bottom: 1px solid #fff; background: #c4daf9; }
.navlabel { height: 26px; line-height: 26px; padding-left: 8px; }
.canvasrow { display: flex; height: 655px; }
.navbar { width: 28px; padding-left: 4px; display: flex; flex-direction: column; }
.nv { display: flex; align-items: center; width: 24px; }
.nv span { padding: 2px; margin: -6px 0 0 2px; }
.nv .on { background: #ffbb6e; outline: 1px solid #000080; }
.scene { width: 1531px; height: 655px; background: #000; display: block; }
.info { display: grid; grid-template-columns: 96px 72px 48px auto; padding-left: 30px; line-height: 15px; }
.hsplit { height: 5px; border-top: 1px solid #000080; border-bottom: 1px solid #000080; background: #c4daf9; margin-top: 1px; }
.command { flex: 1; background: #dcebfe; }
.console { margin: 2px 4px 0 6px; box-shadow: 0 -2px 0 #fff; height: 117px; border: 1px solid #7a7a7a; background: #fff; display: grid; grid-template: 96px 16px / 1fr 16px; padding: 1px; }
.lines { padding: 2px 0 0 4px; letter-spacing: -.055px; }
.lines p { margin: 0; height: 15px; line-height: 15px; }
.console .vbar .thumb { width: 15px; height: 17px; margin-top: 45px; }
.console .hbar { grid-column: 1 / 3; background: #f0f0f0; color: #bbb; display: flex; justify-content: space-between; padding-right: 18px; }

.status { height: 23px; border: 1px solid #4f7fc0; background: linear-gradient(#d9e8fd, #b0cff8 40%, #d2e4fc); }
.taskbar { height: 5px; background: #01040c; }
.taskbar i { display: block; width: 48px; height: 5px; margin-left: 637px; background: #33373c; }

.dialog { position: absolute; left: 476px; top: 205px; width: 239px; height: 518px; border: 1px solid #2b2b2b; background: #f0f0f0; }
.dtitle { display: flex; align-items: center; height: 25px; background: #fff; color: #808080; padding: 0 0 1px 3px; font: 12px/24px "Open Sans", "Noto Sans", sans-serif; }
.dtitle span { width: 91px; margin-left: 5px; letter-spacing: -.2px; }
.dtitle .ic + .ic { margin-left: 29px; }
.faint { color: #dcdcdc; }
.dtools { display: flex; align-items: center; padding: 7px 0 0 7px; height: 29px; }
.btn { height: 21px; border: 1px solid #adadad; background: #e1e1e1; margin-top: 1px; }
.btn.c { width: 30px; margin-right: 10px; }
.btn.l { width: 86px; margin-right: 11px; }
.dtools span { width: 38px; margin-top: -3px; }
.field { width: 48px; height: 22px; border: 1px solid #7a7a7a; background: #fff; }
.dlabel { padding-left: 8px; height: 15px; line-height: 15px; }
.plist { margin: 0 0 0 6px; width: 225px; height: 412px; border: 1px solid #828790; background: #fff; padding: 0 1px; overflow: hidden; }
.phead { height: 25px; border-right: 1px solid #ddd; }
.prow { height: 19px; line-height: 20px; padding-left: 6px; border-bottom: 1px solid #ededed; }
.prow.cur { margin-left: 4px; padding-left: 2px; background: #f0f0f0; }
.export { display: block; width: 206px; height: 21px; margin: 6px 0 0 7px; border: 2px solid #0078d7; background: #e1e1e1; }

.mini { position: absolute; left: 2px; top: 1011px; width: 156px; height: 27px; display: flex; align-items: center; background: #fff; border: 1px solid #999; box-shadow: 2px 2px 5px rgba(0, 0, 0, .4); padding: 0 0 1px 3px; color: #808080; }
.mini .ic + .ic { margin-left: 13px; }
.mini .ic + .ic + .ic { margin-left: 29px; }
.mini .ic + .ic + .ic + .ic { margin-left: 30px; }
</style>
